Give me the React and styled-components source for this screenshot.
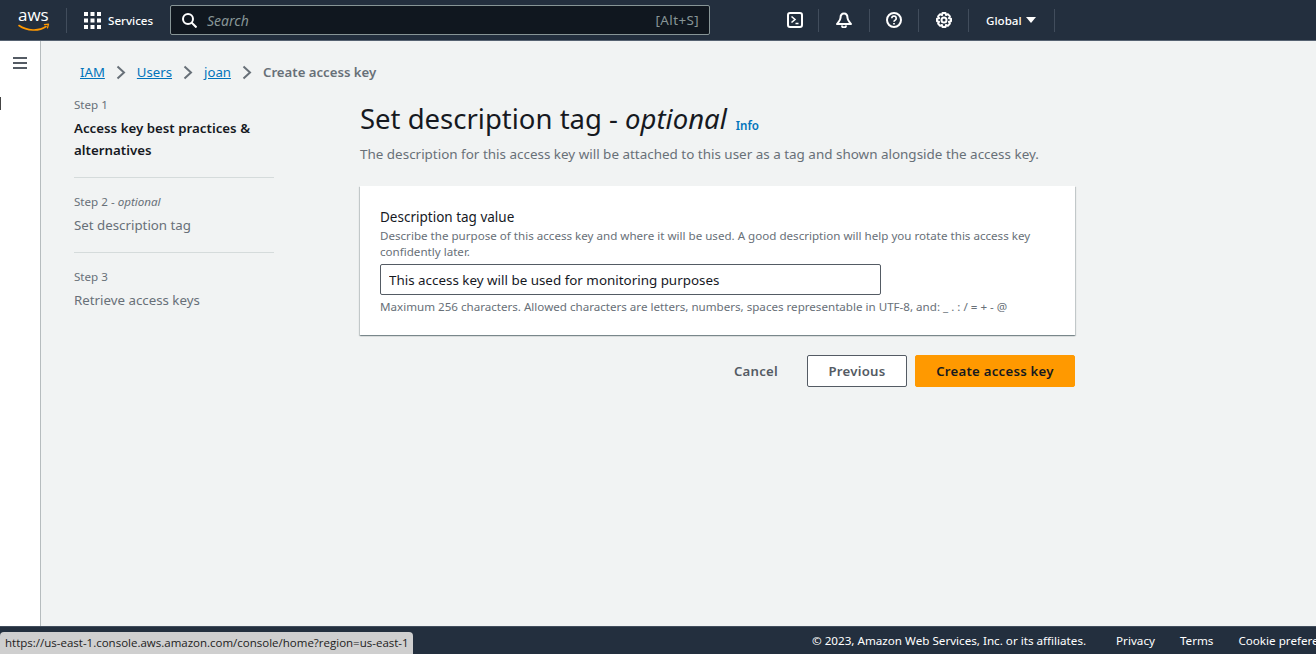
import React from 'react';
import styled, { createGlobalStyle } from 'styled-components';

const GlobalStyle = createGlobalStyle`
    html, body {
        margin: 0;
        height: 100%;
        overflow: hidden;
        background: #f1f3f3;
        font-family: "Noto Sans", "Open Sans", sans-serif;
        font-size: 13.4px;
        color: #16191f;
    }
`;

const Page = styled.div`
    position: relative;
    height: 654px;
    display: grid;
    grid-template-rows: 41px 1fr 28px;
    overflow: hidden;
`;

const TopBar = styled.header`
    display: flex;
    align-items: center;
    background: #232f3e;
    border-bottom: 1px solid #566271;
    box-sizing: border-box;
    height: 41px;
    color: #fff;
`;

const Logo = styled.div`
    width: 67px;
    height: 25px;
    display: flex;
    padding-left: 18px;
    box-sizing: border-box;
    border-right: 1px solid #414d5c;
`;

const ServicesButton = styled.div`
    display: flex;
    align-items: center;
    gap: 7px;
    width: 103px;
    padding-left: 17px;
    box-sizing: border-box;
    font-size: 11.6px;
    font-weight: 500;
    color: #fff;
`;

const SearchBox = styled.div`
    display: flex;
    align-items: center;
    width: 540px;
    height: 30px;
    box-sizing: border-box;
    padding: 0 10px 0 11px;
    background: #10171f;
    border: 1px solid #879596;
    border-radius: 2px;
    margin-right: 67px;
`;

const SearchText = styled.span`
    flex: 1;
    margin-left: 10px;
    font-size: 14px;
    font-style: italic;
    color: #879596;
`;

const Shortcut = styled.span`
    font-size: 13.4px;
    letter-spacing: 0.4px;
    color: #879596;
`;

const IconCell = styled.div`
    width: ${p => p.$w}px;
    height: 23px;
    display: flex;
    align-items: center;
    justify-content: center;
    padding-right: ${p => p.$shift || 0}px;
    border-right: 1px solid #414d5c;
    box-sizing: border-box;
`;

const RegionCell = styled(IconCell)`
    justify-content: flex-start;
    gap: 4px;
    padding-left: 17px;
    font-size: 11.6px;
    font-weight: 500;
`;

const Body = styled.div`
    display: flex;
    min-height: 0;
`;

const SideRail = styled.aside`
    position: relative;
    width: 41px;
    box-sizing: border-box;
    background: #fff;
    border-right: 1px solid #b6bcbe;
    padding: 14px 0 0 13px;
`;

const RailMark = styled.span`
    position: absolute;
    left: 0;
    top: 56px;
    width: 1px;
    height: 13px;
    background: #444;
`;

const Content = styled.main`
    flex: 1;
    padding: 20px 0 0 33px;
`;

const Crumbs = styled.nav`
    display: flex;
    align-items: center;
    height: 22px;
    margin-left: 6px;
    font-size: 13.2px;
`;

const CrumbLink = styled.a`
    color: #0073bb;
    text-decoration: underline;
`;

const CrumbCurrent = styled.span`
    color: #687078;
    font-weight: 600;
`;

const CrumbSep = styled.span`
    display: flex;
    width: 32px;
    justify-content: center;
`;

const Wizard = styled.div`
    display: flex;
    margin-top: 14px;
`;

const Steps = styled.ol`
    list-style: none;
    margin: 0 86px 0 0;
    padding: 0;
    width: 200px;
`;

const Step = styled.li`
    padding-bottom: 16px;
    margin-bottom: 16px;
    border-bottom: ${p => (p.$last ? 'none' : '1px solid #d5dbdb')};
`;

const StepLabel = styled.div`
    font-size: 11.6px;
    line-height: 16px;
    color: #687078;
    margin-bottom: 4px;
    i { font-style: italic; }
`;

const StepName = styled.div`
    font-size: 13.3px;
    line-height: 22px;
    color: ${p => (p.$active ? '#16191f' : '#687078')};
    font-weight: ${p => (p.$active ? 600 : 400)};
`;

const Main = styled.section`
    width: 715px;
`;

const Title = styled.h1`
    margin: 2px 0 0;
    font-size: 27.5px;
    line-height: 40px;
    font-weight: 400;
    color: #16191f;
    em { font-style: italic; }
`;

const InfoLink = styled.a`
    margin-left: 9px;
    font-size: 11.6px;
    font-weight: 600;
    color: #0073bb;
    vertical-align: -1px;
`;

const Lead = styled.p`
    margin: -2px 0 0;
    font-size: 13.45px;
    line-height: 20px;
    color: #687078;
`;

const Card = styled.div`
    margin-top: 22px;
    background: #fff;
    padding: 21px 20px 20px;
    height: 149px;
    box-sizing: border-box;
    box-shadow: 0 1px 1px 0 rgba(0, 28, 36, 0.3), 1px 1px 1px 0 rgba(0, 28, 36, 0.15), -1px 1px 1px 0 rgba(0, 28, 36, 0.15);
`;

const FieldLabel = styled.label`
    display: block;
    font-size: 13.5px;
    line-height: 21px;
    color: #16191f;
`;

const Hint = styled.div`
    font-size: 11.6px;
    line-height: 16px;
    color: #687078;
`;

const TextInput = styled.input`
    display: block;
    width: 501px;
    height: 31px;
    box-sizing: border-box;
    margin: 4px 0;
    padding: 0 8px;
    border: 1px solid #545b64;
    border-radius: 2px;
    background: #fff;
    color: #16191f;
    font: inherit;
    font-size: 13.4px;
    outline: none;
`;

const Actions = styled.div`
    display: flex;
    justify-content: flex-end;
    align-items: center;
    gap: 8px;
    margin-top: 20px;
`;

const Button = styled.button`
    height: 32px;
    box-sizing: border-box;
    border-radius: 2px;
    font-family: inherit;
    font-size: 13.2px;
    font-weight: 600;
    letter-spacing: 0.25px;
    width: ${p => p.$w}px;
    padding: 0;
    color: ${p => (p.$primary ? '#16191f' : '#545b64')};
    background: ${p => (p.$primary ? '#ff9900' : p.$plain ? 'transparent' : '#fff')};
    border: 1px solid ${p => (p.$primary ? '#ff9900' : p.$plain ? 'transparent' : '#545b64')};
`;

const Footer = styled.footer`
    background: #232f3e;
    border-top: 1px solid #414d5c;
    box-sizing: border-box;
    display: flex;
    align-items: center;
    padding-left: 812px;
    white-space: nowrap;
    overflow: hidden;
    color: #fff;
    font-size: 11.65px;
`;

const FootLink = styled.a`
    margin-left: ${p => p.$gap}px;
    color: #fff;
`;

const StatusTip = styled.div`
    position: absolute;
    left: 0;
    bottom: 0;
    height: 22px;
    width: 413px;
    box-sizing: border-box;
    padding: 3px 0 0 5px;
    background: #cfcfcf;
    border-radius: 4px 4px 0 0;
    color: #222;
    font-family: "Open Sans", sans-serif;
    font-size: 11.5px;
    white-space: nowrap;
`;

const AwsLogo = () => (
    <svg width="32" height="25" viewBox="0 0 32 25" fill="none">
        <text x="0" y="13" fontFamily="'Open Sans', sans-serif" fontSize="17" fill="#fff">aws</text>
        <path d="M1 17.500c8 5.500 20 6 27 1" stroke="#ff9900" strokeWidth="1.600" strokeLinecap="round" />
        <path d="M26.500 16.600l4-.5-1 3.800" stroke="#ff9900" strokeWidth="1.300" strokeLinecap="round" strokeLinejoin="round" />
    </svg>
);

const GridIcon = () => (
    <svg width="17" height="17" viewBox="0 0 17 17" fill="#fff">
        {[0, 6.5, 13].map(y => [0, 6.5, 13].map(x => (
            <rect key={`${x}-${y}`} x={x} y={y} width="4" height="4" />
        )))}
    </svg>
);

const SearchIcon = () => (
    <svg width="15" height="15" viewBox="0 0 15 15" fill="none" stroke="#fff" strokeWidth="2">
        <circle cx="6" cy="6" r="5" />
        <path d="M9.500 9.500L14.500 14.500" />
    </svg>
);

const MenuIcon = () => (
    <svg width="14" height="12" viewBox="0 0 14 12" fill="#545b64">
        <rect y="0" width="14" height="2" />
        <rect y="5" width="14" height="2" />
        <rect y="10" width="14" height="2" />
    </svg>
);

const ChevronIcon = () => (
    <svg width="10" height="15" viewBox="0 0 10 15" fill="none" stroke="#687078" strokeWidth="2">
        <path d="M1.500 1.500L8 7.500L1.500 13.500" />
    </svg>
);

const TerminalIcon = () => (
    <svg width="16" height="16" viewBox="0 0 16 16" fill="none" stroke="#fff" strokeWidth="2">
        <rect x="1" y="1" width="14" height="14" rx="2" />
        <path d="M4.500 4.500L8 7.500l-3.500 3M8.500 11.500h3" strokeWidth="1.600" />
    </svg>
);

const BellIcon = () => (
    <svg width="16" height="16" viewBox="0 0 16 16" fill="none" stroke="#fff" strokeWidth="2" strokeLinejoin="round">
        <path d="M8 1.500C5.500 1.500 4.500 3.500 4.500 6C4.500 8 2.500 10 1 12H15C13.500 10 11.500 8 11.500 6C11.500 3.500 10.500 1.500 8 1.500Z" />
        <path d="M6 13.500a2 2 0 0 0 4 0" />
    </svg>
);

const HelpIcon = () => (
    <svg width="16" height="16" viewBox="0 0 16 16" fill="none" stroke="#fff" strokeWidth="2">
        <circle cx="8" cy="8" r="7" />
        <path d="M5.800 6.200a2.200 2.200 0 1 1 3.400 1.900c-.8.500-1.200.9-1.200 1.700" strokeWidth="1.700" />
        <path d="M8 11v1.600" strokeWidth="1.700" />
    </svg>
);

const GearIcon = () => (
    <svg width="16" height="16" viewBox="0 0 16 16" fill="none" stroke="#fff" strokeWidth="2" strokeLinejoin="round">
        <path d="M6.500 1h3l.5 2.100 1.900-.9 2 2.200-1 1.800 2.100.6v2.400l-2.100.6 1 1.800-2 2.200-1.900-.9-.5 2.100h-3L6 12.900l-1.900.9-2-2.200 1-1.800L1 9.200V6.800l2.100-.6-1-1.800 2-2.200 1.900.9z" />
        <circle cx="8" cy="8" r="2.500" />
    </svg>
);

const Caret = () => (
    <svg width="10" height="6" viewBox="0 0 10 6" fill="#fff">
        <path d="M0 0h10L5 6z" />
    </svg>
);

const steps = [
    { label: 'Step 1', name: 'Access key best practices & alternatives', active: true },
    { label: 'Step 2', optional: true, name: 'Set description tag' },
    { label: 'Step 3', name: 'Retrieve access keys', last: true },
];

const Separator = () => (
    <CrumbSep><ChevronIcon /></CrumbSep>
);

const App = () => {
    return (
        <Page>
            <GlobalStyle />
            <TopBar>
                <Logo><AwsLogo /></Logo>
                <ServicesButton><GridIcon /> Services</ServicesButton>
                <SearchBox>
                    <SearchIcon />
                    <SearchText>Search</SearchText>
                    <Shortcut>[Alt+S]</Shortcut>
                </SearchBox>
                <IconCell $w={42} $shift={6}><TerminalIcon /></IconCell>
                <IconCell $w={51}><BellIcon /></IconCell>
                <IconCell $w={49}><HelpIcon /></IconCell>
                <IconCell $w={50}><GearIcon /></IconCell>
                <RegionCell $w={86}>Global <Caret /></RegionCell>
            </TopBar>
            <Body>
                <SideRail>
                    <MenuIcon />
                    <RailMark />
                </SideRail>
                <Content>
                    <Crumbs>
                        <CrumbLink>IAM</CrumbLink>
                        <Separator />
                        <CrumbLink>Users</CrumbLink>
                        <Separator />
                        <CrumbLink>joan</CrumbLink>
                        <Separator />
                        <CrumbCurrent>Create access key</CrumbCurrent>
                    </Crumbs>
                    <Wizard>
                        <Steps>
                            {steps.map(s => (
                                <Step key={s.label} $last={s.last}>
                                    <StepLabel>{s.label}{s.optional && <> - <i>optional</i></>}</StepLabel>
                                    <StepName $active={s.active}>{s.name}</StepName>
                                </Step>
                            ))}
                        </Steps>
                        <Main>
                            <Title>Set description tag - <em>optional</em><InfoLink>Info</InfoLink></Title>
                            <Lead>The description for this access key will be attached to this user as a tag and shown alongside the access key.</Lead>
                            <Card>
                                <FieldLabel>Description tag value</FieldLabel>
                                <Hint>Describe the purpose of this access key and where it will be used. A good description will help you rotate this access key confidently later.</Hint>
                                <TextInput readOnly value="This access key will be used for monitoring purposes" />
                                <Hint>Maximum 256 characters. Allowed characters are letters, numbers, spaces representable in UTF-8, and: _ . : / = + - @</Hint>
                            </Card>
                            <Actions>
                                <Button $plain $w={86}>Cancel</Button>
                                <Button $w={100}>Previous</Button>
                                <Button $primary $w={160}>Create access key</Button>
                            </Actions>
                        </Main>
                    </Wizard>
                </Content>
            </Body>
            <Footer>
                <span>© 2023, Amazon Web Services, Inc. or its affiliates.</span>
                <FootLink $gap={30}>Privacy</FootLink>
                <FootLink $gap={25}>Terms</FootLink>
                <FootLink $gap={25}>Cookie preferences</FootLink>
            </Footer>
            <StatusTip>https://us-east-1.console.aws.amazon.com/console/home?region=us-east-1</StatusTip>
        </Page>
    );
};

export default App;
